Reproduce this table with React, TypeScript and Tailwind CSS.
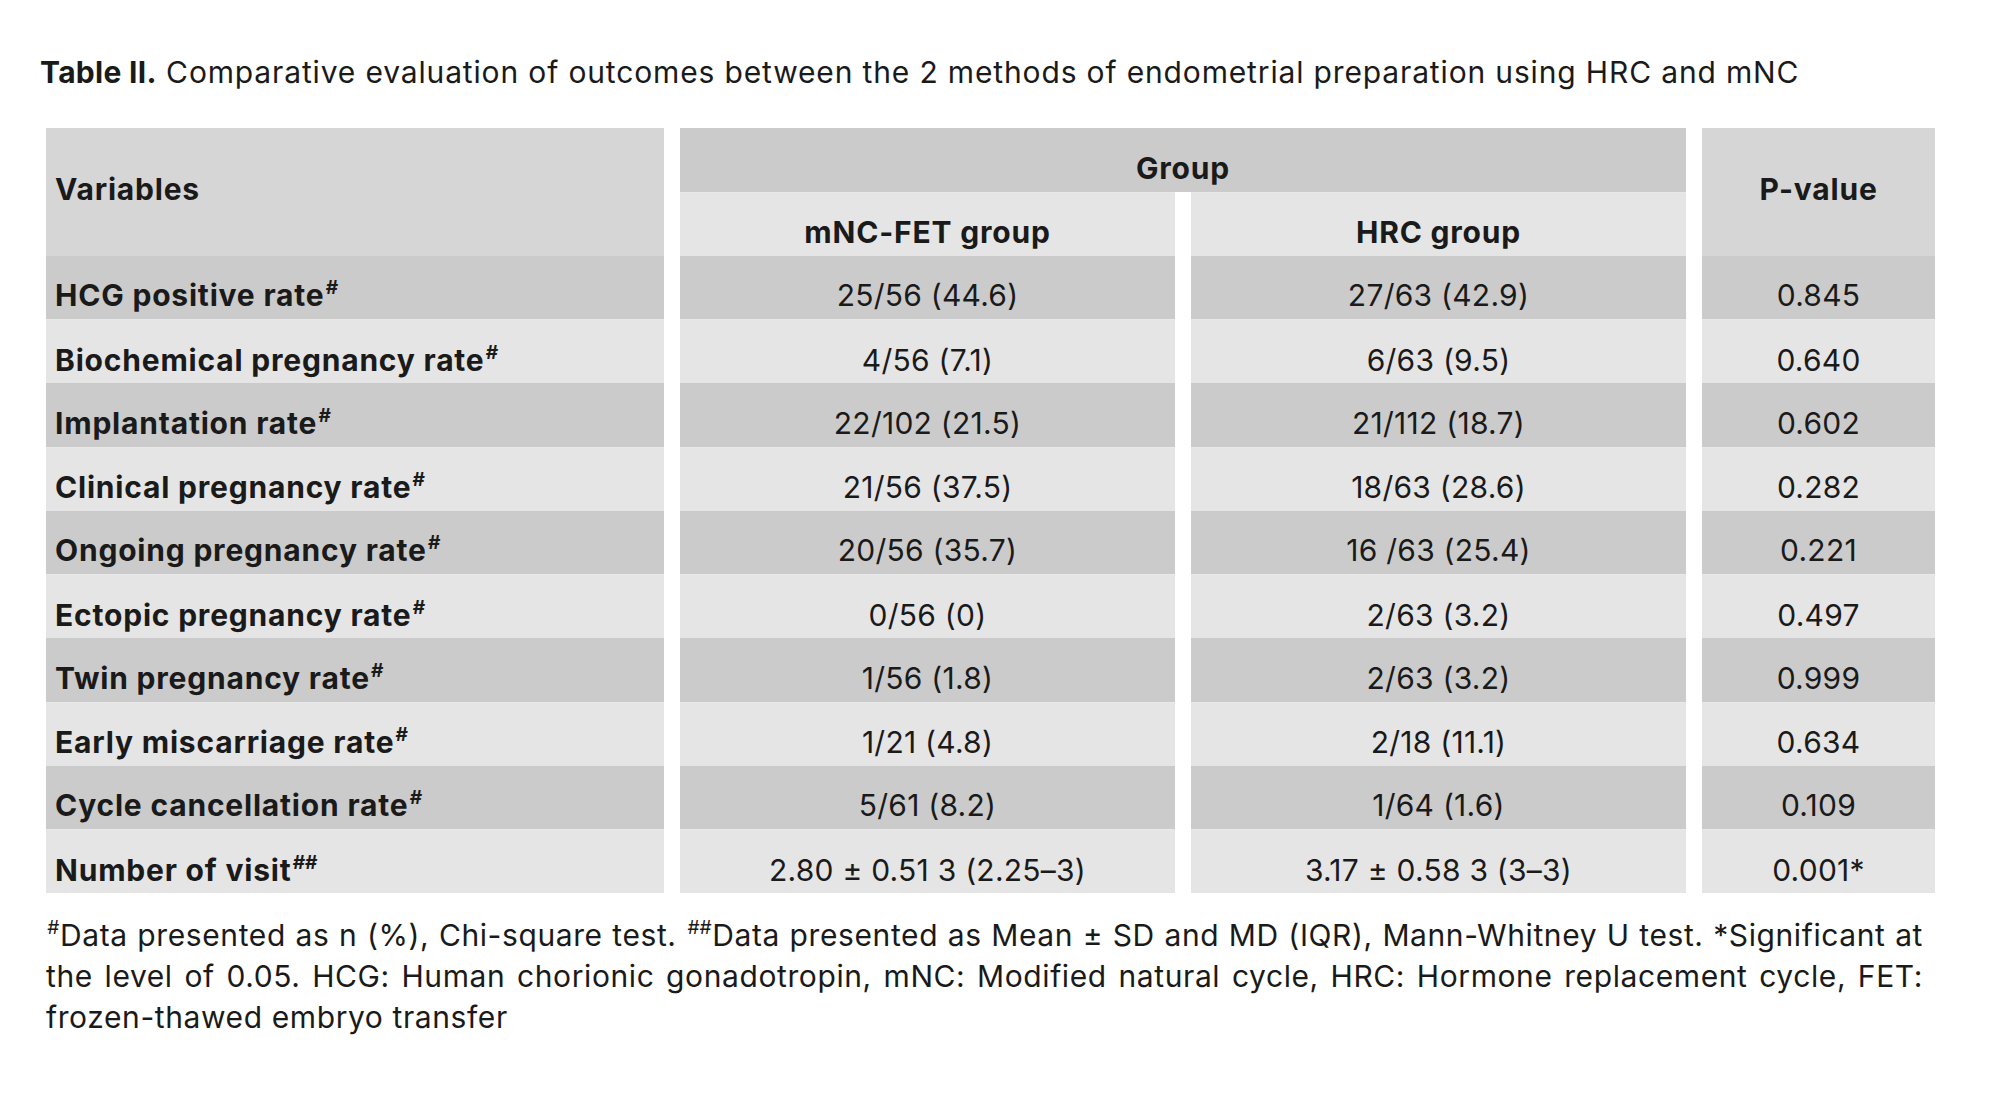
import React from 'react';

type Row = { label: string; mark: string; mnc: string; hrc: string; p: string };

const rows: Row[] = [
  { label: 'HCG positive rate', mark: '#', mnc: '25/56 (44.6)', hrc: '27/63 (42.9)', p: '0.845' },
  { label: 'Biochemical pregnancy rate', mark: '#', mnc: '4/56 (7.1)', hrc: '6/63 (9.5)', p: '0.640' },
  { label: 'Implantation rate', mark: '#', mnc: '22/102 (21.5)', hrc: '21/112 (18.7)', p: '0.602' },
  { label: 'Clinical pregnancy rate', mark: '#', mnc: '21/56 (37.5)', hrc: '18/63 (28.6)', p: '0.282' },
  { label: 'Ongoing pregnancy rate', mark: '#', mnc: '20/56 (35.7)', hrc: '16 /63 (25.4)', p: '0.221' },
  { label: 'Ectopic pregnancy rate', mark: '#', mnc: '0/56 (0)', hrc: '2/63 (3.2)', p: '0.497' },
  { label: 'Twin pregnancy rate', mark: '#', mnc: '1/56 (1.8)', hrc: '2/63 (3.2)', p: '0.999' },
  { label: 'Early miscarriage rate', mark: '#', mnc: '1/21 (4.8)', hrc: '2/18 (11.1)', p: '0.634' },
  { label: 'Cycle cancellation rate', mark: '#', mnc: '5/61 (8.2)', hrc: '1/64 (1.6)', p: '0.109' },
  { label: 'Number of visit', mark: '##', mnc: '2.80 ± 0.51 3 (2.25–3)', hrc: '3.17 ± 0.58 3 (3–3)', p: '0.001*' },
];

function Mark({ children }: { children: string }) {
  return (
    <span className="mx-[1px] align-[12px] text-[19px] leading-none tracking-normal italic">
      {children}
    </span>
  );
}

function Cell({
  children,
  className = '',
}: {
  children: React.ReactNode;
  className?: string;
}) {
  return (
    <div className={`flex h-[63.75px] items-center pt-[17px] ${className}`}>
      {children}
    </div>
  );
}

export default function App() {
  return (
    <div
      className="h-[1097px] w-[2000px] overflow-hidden bg-white text-[#1a1a1a]"
      style={{ fontFamily: 'Inter, Lato, "Noto Sans", sans-serif' }}
    >
      <h1 className="pl-[40px] pt-[52px] text-[30px] leading-[40px] tracking-[0.85px]">
        <span className="font-bold tracking-[0.3px]">Table II.</span> Comparative evaluation of
        outcomes between the 2 methods of endometrial preparation using HRC and mNC
      </h1>

      <div className="ml-[46px] mt-[36px] grid w-[1889px] grid-cols-[618px_495px_495px_233px] gap-x-4 text-[30px] tracking-[0.25px]">
        {/* header */}
        <div className="row-span-2 flex h-[127.5px] items-center bg-[#d6d6d6] pb-[4px] pl-[9px] font-bold tracking-[0.8px]">
          Variables
        </div>
        <Cell className="col-span-2 justify-center bg-[#cbcbcb] font-bold tracking-[0.8px]">
          Group
        </Cell>
        <div className="row-span-2 flex h-[127.5px] items-center justify-center bg-[#d6d6d6] pb-[4px] font-bold tracking-[0.8px]">
          P-value
        </div>
        <Cell className="justify-center border-t border-[#e8e8e8] bg-[#e5e5e5] font-bold tracking-[0.8px]">
          mNC-FET group
        </Cell>
        <Cell className="justify-center border-t border-[#e8e8e8] bg-[#e5e5e5] font-bold tracking-[0.8px]">
          HRC group
        </Cell>

        {rows.map((r, i) => {
          const bg = i % 2 === 0 ? 'bg-[#cbcbcb]' : 'border-t border-[#e9e9e9] bg-[#e5e5e5]';
          return (
            <React.Fragment key={r.label}>
              <Cell className={`${bg} pl-[9px] font-bold tracking-[0.8px]`}>
                <span>
                  {r.label}
                  <Mark>{r.mark}</Mark>
                </span>
              </Cell>
              <Cell className={`${bg} justify-center`}>{r.mnc}</Cell>
              <Cell className={`${bg} justify-center`}>{r.hrc}</Cell>
              <Cell className={`${bg} justify-center`}>{r.p}</Cell>
            </React.Fragment>
          );
        })}
      </div>

      <p className="ml-[46px] mt-[22px] w-[1877px] text-justify text-[30px] leading-[41px] tracking-[0.6px]">
        <Mark>#</Mark>Data presented as n (%), Chi-square test. <Mark>##</Mark>Data presented as
        Mean ± SD and MD (IQR), Mann-Whitney U test. *Significant at the level of 0.05. HCG: Human
        chorionic gonadotropin, mNC: Modified natural cycle, HRC: Hormone replacement cycle, FET:
        frozen-thawed embryo transfer
      </p>
    </div>
  );
}
